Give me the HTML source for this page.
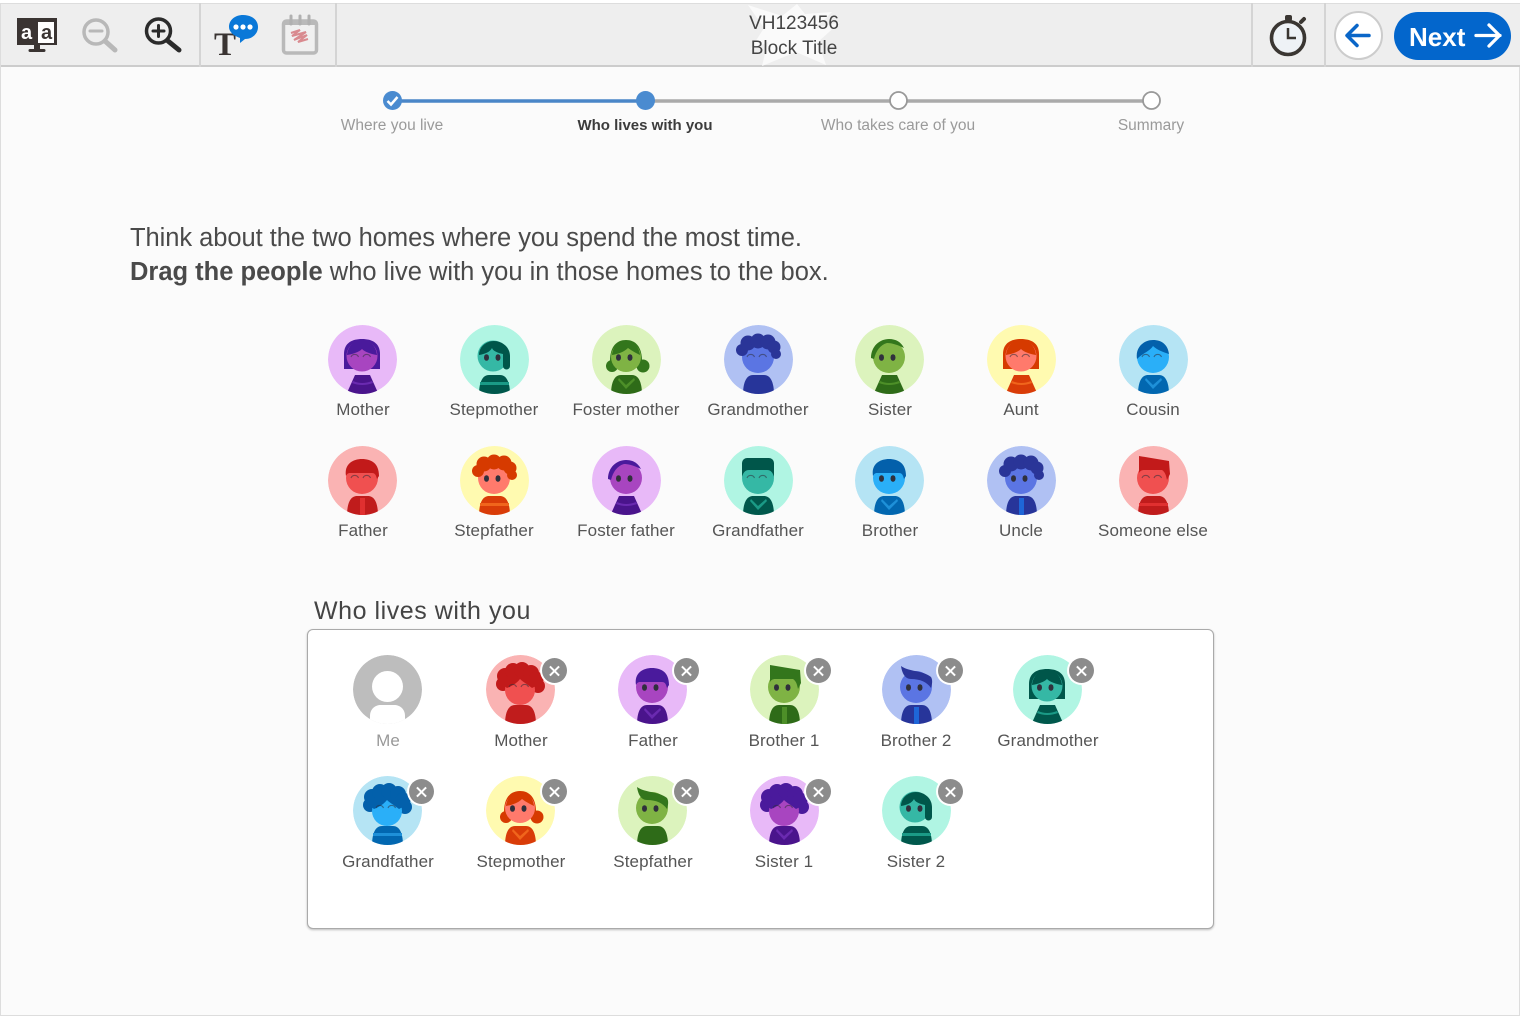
<!DOCTYPE html>
<html><head><meta charset="utf-8"><title>Who lives with you</title>
<style>
html{background:#fff}
html,body{margin:0;padding:0;width:1522px;height:1019px;overflow:hidden}
body{position:relative;font-family:"Liberation Sans",sans-serif;color:#444;background:#fff;filter:blur(.35px)}
#pg{position:absolute;left:0;top:3px;width:1520px;height:1013px;background:#fbfbfb;border:1px solid #ddd;box-sizing:border-box}
#hd{position:absolute;left:1px;top:3px;width:1519px;height:64px;background:#eee;border-top:1px solid #ddd;border-bottom:2px solid #ccc;box-sizing:border-box}
.dv{position:absolute;top:3px;height:64px;width:2px;background:#d4d4d4}
.t{position:absolute;white-space:nowrap;line-height:20px}
.l{position:absolute;width:170px;text-align:center;font-size:17px;letter-spacing:.1px;line-height:20px;color:#555;white-space:nowrap}
.a{position:absolute;width:69px;height:69px;clip-path:circle(50%)}
.x{position:absolute;width:25px;height:25px;border-radius:50%;background:#8c8c8c;box-shadow:0 0 0 2px #fff}
.x:before,.x:after{content:"";position:absolute;left:6px;top:11.500px;width:13px;height:2px;background:#fff;transform:rotate(45deg)}
.x:after{transform:rotate(-45deg)}
.pu{--b:#e8b9f8;--h:#4a1a9c;--f:#a845c0;--c:#4a148c;--s:#6a2ab0}
.te{--b:#b0f5e3;--h:#00564a;--f:#35b8a5;--c:#00584c;--s:#1a9a86}
.gr{--b:#dcf3bd;--h:#33761c;--f:#7fb344;--c:#2e6b18;--s:#4d8f28}
.in{--b:#b0c1f3;--h:#2a3598;--f:#5b75e3;--c:#27359a;--s:#1e66d8}
.ye{--b:#fffab0;--h:#d63a00;--f:#ff7a6c;--c:#d93c08;--s:#f0651c}
.bl{--b:#b5e4f4;--h:#0360ab;--f:#2aaff8;--c:#0267b0;--s:#1e90d8}
.re{--b:#fab3b3;--h:#c21a1a;--f:#f05050;--c:#c01c1c;--s:#e03030}
#box{position:absolute;left:307px;top:629px;width:907px;height:300px;background:#fff;border:1.5px solid #aaa;border-radius:6px;box-sizing:border-box;box-shadow:0 1px 2px rgba(0,0,0,.25)}
#nx{position:absolute;left:1394px;top:12px;width:117px;height:48px;border-radius:24px;background:#0366cc}
</style></head><body>
<div id="pg"></div><div id="hd"></div>
<div class="dv" style="left:199px"></div><div class="dv" style="left:335px"></div><div class="dv" style="left:1251px"></div><div class="dv" style="left:1324px"></div>

<svg style="position:absolute;left:0;top:0" width="1522" height="70" viewBox="0 0 1522 70">
<polygon points="748,5 782,16 797,4 805,14 832,12 816,28 840,22 818,42 826,65 796,52 762,66 768,42 750,50 764,28" fill="#fafafa"/>
<rect x="17" y="18" width="40" height="27" fill="#3a3432"/><rect x="38" y="22" width="16" height="21" fill="#fff"/>
<text x="21" y="39" font-family="Liberation Sans" font-weight="bold" font-size="20" fill="#fff">a</text>
<text x="41" y="39" font-family="Liberation Sans" font-weight="bold" font-size="20" fill="#3a3432">a</text>
<rect x="34" y="45" width="6" height="5" fill="#3a3432"/><rect x="28.500" y="49" width="17" height="3" rx="1.500" fill="#3a3432"/>
<g fill="none" stroke="#b8b8b8" stroke-linecap="round"><circle cx="96" cy="32" r="12" stroke-width="3.500"/><path d="M90 31h12" stroke-width="3"/><path d="M105 41l10 9" stroke-width="5"/></g>
<g fill="none" stroke="#2b2b2b" stroke-linecap="round"><circle cx="158.500" cy="31" r="12" stroke-width="3.500"/><path d="M153 31h11M158.500 25.500v11" stroke-width="3"/><path d="M168 41l11 9" stroke-width="5"/></g>
<text x="214" y="55" font-family="Liberation Serif" font-weight="bold" font-size="33" fill="#3a3432">T</text>
<path d="M243 15c9 0 15 5 15 12s-6 12-13 12l-5 4 0-5c-6-2-11-6-11-11 0-7 6-12 14-12z" fill="#0a78d8"/>
<circle cx="236" cy="27" r="2.600" fill="#fff"/><circle cx="243" cy="27" r="2.600" fill="#fff"/><circle cx="250" cy="27" r="2.600" fill="#fff"/>
<rect x="283.500" y="21" width="33" height="32" rx="3" fill="#f0f0f0" stroke="#b9b9b9" stroke-width="3.500"/>
<path d="M283 21h34v4h-34z" fill="#b9b9b9"/><path d="M291 16v8M300 16v8M309 16v8" stroke="#b0b0b0" stroke-width="3" stroke-linecap="round"/>
<path d="M291 33l9-3-8 6 14-4-12 8 13-5-9 7 10-3" fill="none" stroke="#d98a8f" stroke-width="2"/>
<circle cx="1288" cy="38" r="16.500" fill="#eef2f6" stroke="#3a3632" stroke-width="3.600"/>
<rect x="1285" y="15" width="7" height="6" rx="2" fill="#3a3632"/><path d="M1301 22l3-3" stroke="#3a3632" stroke-width="4" stroke-linecap="round"/>
<path d="M1288 28v10h8" fill="none" stroke="#3a3632" stroke-width="2.500"/>
<circle cx="1358.500" cy="35.500" r="23.500" fill="#fff" stroke="#ccc" stroke-width="2"/>
<path d="M1369 35.500h-21M1357 25.500l-10 10 10 10" fill="none" stroke="#0a66c8" stroke-width="3.500" stroke-linecap="round" stroke-linejoin="round"/>
</svg>
<div id="nx"></div>
<div class="t" style="left:1409px;top:25px;font-size:26px;font-weight:bold;color:#fff;line-height:24px">Next</div>
<svg style="position:absolute;left:1470px;top:20px" width="36" height="32"><path d="M6 15.500h24M19 5l10.500 10.500-10.500 10.500" fill="none" stroke="#fff" stroke-width="3.300" stroke-linecap="round" stroke-linejoin="round"/></svg>
<div class="t" style="left:700px;width:188px;text-align:center;top:14px;font-size:19px;color:#444">VH123456</div>
<div class="t" style="left:700px;width:188px;text-align:center;top:39px;font-size:19px;color:#444">Block Title</div>

<svg style="position:absolute;left:370px;top:85px" width="800" height="30" viewBox="370 85 800 30">
<path d="M645 101H1151" stroke="#aaa" stroke-width="3.500"/><path d="M392 101H645" stroke="#4a86c8" stroke-width="3.500"/>
<circle cx="392.500" cy="100.500" r="9.500" fill="#4a8bd0"/><path d="M387.500 101l3.500 3.500 6.500-7.500" fill="none" stroke="#fff" stroke-width="2.500"/>
<circle cx="645.500" cy="100.500" r="9.500" fill="#4a8bd0"/>
<circle cx="898.500" cy="100.500" r="8.500" fill="#fff" stroke="#999" stroke-width="1.800"/>
<circle cx="1151.500" cy="100.500" r="8.500" fill="#fff" stroke="#999" stroke-width="1.800"/>
</svg>
<div class="l" style="left:307px;top:116px;font-size:15.500px;letter-spacing:0;color:#9a9a9a">Where you live</div>
<div class="l" style="left:560px;top:116px;font-size:15px;letter-spacing:0;font-weight:bold;color:#3c3c3c">Who lives with you</div>
<div class="l" style="left:813px;top:116px;font-size:15.500px;letter-spacing:0;color:#9a9a9a">Who takes care of you</div>
<div class="l" style="left:1066px;top:116px;font-size:15.500px;letter-spacing:0;color:#9a9a9a">Summary</div>

<div class="t" style="left:130px;top:224px;font-size:25.500px;letter-spacing:-.05px;line-height:28px;color:#4a4a4a">Think about the two homes where you spend the most time.</div>
<div class="t" style="left:130px;top:258px;font-size:25.500px;line-height:28px;color:#4a4a4a"><b>Drag the people</b> who live with you in those homes to the box.</div>

<svg width="0" height="0" style="position:absolute"><defs>
<circle id="bg" cx="34.500" cy="34.500" r="34.500" style="fill:var(--b)"/>
<circle id="face" cx="34" cy="32" r="16" style="fill:var(--f)"/>
<g id="ed" fill="#30303c"><ellipse cx="26.500" cy="32.500" rx="2.500" ry="3.300"/><ellipse cx="38" cy="32.500" rx="2.500" ry="3.300"/></g>
<g id="ec" fill="none" stroke="#30303c" stroke-opacity=".55" stroke-width="1.100"><path d="M23 32a4 4 0 0 1 7.500 0M35 32a4 4 0 0 1 7.500 0"/></g>
<path id="b1" d="M19 70C19 56 23 50 29 50H40C46 50 50 56 50 70Z" style="fill:var(--c)"/>
<g id="b2"><path d="M18 70L27 50H42L51 70Z" style="fill:var(--c)"/><path d="M25 56Q34 60 44 56L45 58Q34 62 24 58Z" style="fill:var(--s)"/></g>
<g id="b3"><path d="M19 70C19 56 23 50 29 50H40C46 50 50 56 50 70Z" style="fill:var(--c)"/><path d="M20 57H49V60H20Z" style="fill:var(--s)"/></g>
<g id="b4"><path d="M19 70C19 56 23 50 29 50H40C46 50 50 56 50 70Z" style="fill:var(--c)"/><path d="M27 53L34 60L42 53L43 55L34 64L26 55Z" style="fill:var(--s)"/></g>
<g id="b5"><path d="M19 70C19 56 23 50 29 50H40C46 50 50 56 50 70Z" style="fill:var(--c)"/><path d="M32 52H37V70H32Z" style="fill:var(--s)"/></g>
<g id="bob"><path d="M16 44V29C16 18 24 14 34 14S52 18 52 29V44Z" style="fill:var(--h)"/><circle cx="34" cy="31" r="15.500" style="fill:var(--f)"/><path d="M19 30C20 20 27 15 34 15S48 20 49 30C43 29 37 27 34 24C31 27 25 29 19 30Z" style="fill:var(--h)"/></g>
<g id="side"><circle cx="33" cy="31" r="15.500" style="fill:var(--f)"/><path d="M19 30C19 22 26 16 34 16S50 22 50 31V41a3.500 3.500 0 0 1-7 0V29C38 28 33 26 32 23C30 27 25 29 19 30Z" style="fill:var(--h)"/></g>
<g id="wavy"><circle cx="20" cy="41" r="6" style="fill:var(--h)"/><circle cx="51" cy="41" r="6.500" style="fill:var(--h)"/><path d="M18 36C18 21 25 15 34 15S50 21 50 36Z" style="fill:var(--h)"/><circle cx="34" cy="32" r="15" style="fill:var(--f)"/><path d="M20 30C21 21 27 16 34 16S47 21 48 30C44 28 40 26 36 23C32 27 26 29 20 30Z" style="fill:var(--h)"/></g>
<g id="curly"><use href="#face"/><g style="fill:var(--h)"><circle cx="18" cy="25" r="6"/><circle cx="24" cy="18" r="7.500"/><circle cx="34" cy="16" r="7.500"/><circle cx="44" cy="17" r="7.500"/><circle cx="50" cy="22" r="6.500"/><circle cx="52" cy="29" r="5"/></g></g>
<g id="big"><g style="fill:var(--h)"><circle cx="17" cy="29" r="7"/><circle cx="52" cy="31" r="7"/></g><circle cx="34" cy="35" r="15" style="fill:var(--f)"/><g style="fill:var(--h)"><circle cx="19" cy="21" r="8"/><circle cx="27" cy="16" r="8"/><circle cx="36" cy="15" r="8"/><circle cx="45" cy="18" r="8"/><circle cx="50" cy="24" r="7.500"/><path d="M17 22H52V30L46 33C41 29 37 27 34 24C31 28 26 31 21 33L17 30Z"/></g></g>
<g id="short"><use href="#face"/><path d="M18 30C16 18 25 13 34 13S51 17 51 30L49 33C48 29 47 27 44 27H22C20 27 19 28 18 30Z" style="fill:var(--h)"/></g>
<g id="flat"><use href="#face"/><path d="M18 31V17a5 5 0 0 1 5-5H45a5 5 0 0 1 5 5V31C49 27 47 24 43 24H25C21 24 19 27 18 31Z" style="fill:var(--h)"/></g>
<g id="arc"><use href="#face"/><path d="M16 33C16 21 25 14 34 14C41 14 46 17 49 23C43 20 37 18 32 18C25 20 21 26 19 34Z" style="fill:var(--h)"/></g>
<g id="cap"><use href="#face"/><path d="M18 34C16 22 25 15 34 15S49 20 50 29C44 27 38 25 34 21C31 26 24 28 18 34Z" style="fill:var(--h)"/></g>
<g id="quiff"><use href="#face"/><path d="M20 27L20 10L50 15L51 28L48 34C47 29 46 26 43 24H25C23 24 21 25 20 27Z" style="fill:var(--h)"/></g>
<g id="swoop"><use href="#face"/><path d="M19 11C27 17 40 15 49 22C51 25 50 30 49 33C45 27 38 24 29 24C23 24 20 18 19 11Z" style="fill:var(--h)"/></g>
</defs></svg>

<svg class="a pu" style="left:328px;top:325px"><use href="#bg"/><use href="#b2"/><use href="#bob"/><use href="#ec"/></svg>
<svg class="a te" style="left:460px;top:325px"><use href="#bg"/><use href="#b3"/><use href="#side"/><use href="#ed"/></svg>
<svg class="a gr" style="left:592px;top:325px"><use href="#bg"/><use href="#b4"/><use href="#wavy"/><use href="#ed"/></svg>
<svg class="a in" style="left:724px;top:325px"><use href="#bg"/><use href="#b1"/><use href="#curly"/><use href="#ec"/></svg>
<svg class="a gr" style="left:855px;top:325px"><use href="#bg"/><use href="#b2"/><use href="#arc"/><use href="#ed"/></svg>
<svg class="a ye" style="left:987px;top:325px"><use href="#bg"/><use href="#b2"/><use href="#bob"/><use href="#ec"/></svg>
<svg class="a bl" style="left:1119px;top:325px"><use href="#bg"/><use href="#b4"/><use href="#cap"/><use href="#ec"/></svg>
<svg class="a re" style="left:328px;top:446px"><use href="#bg"/><use href="#b5"/><use href="#short"/><use href="#ec"/></svg>
<svg class="a ye" style="left:460px;top:446px"><use href="#bg"/><use href="#b3"/><use href="#curly"/><use href="#ed"/></svg>
<svg class="a pu" style="left:592px;top:446px"><use href="#bg"/><use href="#b2"/><use href="#arc"/><use href="#ed"/></svg>
<svg class="a te" style="left:724px;top:446px"><use href="#bg"/><use href="#b4"/><use href="#flat"/><use href="#ec"/></svg>
<svg class="a bl" style="left:855px;top:446px"><use href="#bg"/><use href="#b4"/><use href="#short"/><use href="#ed"/></svg>
<svg class="a in" style="left:987px;top:446px"><use href="#bg"/><use href="#b5"/><use href="#curly"/><use href="#ed"/></svg>
<svg class="a re" style="left:1119px;top:446px"><use href="#bg"/><use href="#b3"/><use href="#quiff"/><use href="#ec"/></svg>

<div class="l" style="left:278px;top:400px">Mother</div>
<div class="l" style="left:409px;top:400px">Stepmother</div>
<div class="l" style="left:541px;top:400px">Foster mother</div>
<div class="l" style="left:673px;top:400px">Grandmother</div>
<div class="l" style="left:805px;top:400px">Sister</div>
<div class="l" style="left:936px;top:400px">Aunt</div>
<div class="l" style="left:1068px;top:400px">Cousin</div>
<div class="l" style="left:278px;top:521px">Father</div>
<div class="l" style="left:409px;top:521px">Stepfather</div>
<div class="l" style="left:541px;top:521px">Foster father</div>
<div class="l" style="left:673px;top:521px">Grandfather</div>
<div class="l" style="left:805px;top:521px">Brother</div>
<div class="l" style="left:936px;top:521px">Uncle</div>
<div class="l" style="left:1068px;top:521px">Someone else</div>

<div class="t" style="left:314px;top:597px;font-size:25px;letter-spacing:.55px;line-height:28px;color:#444">Who lives with you</div>
<div id="box"></div>

<svg class="a" style="left:353px;top:655px"><circle cx="34.500" cy="34.500" r="34.500" fill="#bdbdbd"/><circle cx="34.500" cy="31.500" r="15.500" fill="#fff"/><path d="M17 69V61C17 54 22 50 28 50H41C47 50 52 54 52 61V69Z" fill="#fff"/></svg>
<svg class="a re" style="left:486px;top:655px"><use href="#bg"/><use href="#b1"/><use href="#big"/><use href="#ec"/></svg>
<svg class="a pu" style="left:618px;top:655px"><use href="#bg"/><use href="#b4"/><use href="#short"/><use href="#ed"/></svg>
<svg class="a gr" style="left:750px;top:655px"><use href="#bg"/><use href="#b5"/><use href="#quiff"/><use href="#ed"/></svg>
<svg class="a in" style="left:882px;top:655px"><use href="#bg"/><use href="#b5"/><use href="#swoop"/><use href="#ed"/></svg>
<svg class="a te" style="left:1013px;top:655px"><use href="#bg"/><use href="#b2"/><use href="#bob"/><use href="#ed"/></svg>
<svg class="a bl" style="left:353px;top:776px"><use href="#bg"/><use href="#b3"/><use href="#big"/><use href="#ec"/></svg>
<svg class="a ye" style="left:486px;top:776px"><use href="#bg"/><use href="#b4"/><use href="#wavy"/><use href="#ed"/></svg>
<svg class="a gr" style="left:618px;top:776px"><use href="#bg"/><use href="#b1"/><use href="#swoop"/><use href="#ed"/></svg>
<svg class="a pu" style="left:750px;top:776px"><use href="#bg"/><use href="#b4"/><use href="#big"/><use href="#ec"/></svg>
<svg class="a te" style="left:882px;top:776px"><use href="#bg"/><use href="#b3"/><use href="#side"/><use href="#ed"/></svg>

<div class="x" style="left:542px;top:658px"></div>
<div class="x" style="left:674px;top:658px"></div>
<div class="x" style="left:806px;top:658px"></div>
<div class="x" style="left:938px;top:658px"></div>
<div class="x" style="left:1069px;top:658px"></div>
<div class="x" style="left:409px;top:779px"></div>
<div class="x" style="left:542px;top:779px"></div>
<div class="x" style="left:674px;top:779px"></div>
<div class="x" style="left:806px;top:779px"></div>
<div class="x" style="left:938px;top:779px"></div>

<div class="l" style="left:303px;top:731px;color:#999">Me</div>
<div class="l" style="left:436px;top:731px">Mother</div>
<div class="l" style="left:568px;top:731px">Father</div>
<div class="l" style="left:699px;top:731px">Brother 1</div>
<div class="l" style="left:831px;top:731px">Brother 2</div>
<div class="l" style="left:963px;top:731px">Grandmother</div>
<div class="l" style="left:303px;top:852px">Grandfather</div>
<div class="l" style="left:436px;top:852px">Stepmother</div>
<div class="l" style="left:568px;top:852px">Stepfather</div>
<div class="l" style="left:699px;top:852px">Sister 1</div>
<div class="l" style="left:831px;top:852px">Sister 2</div>
</body></html>
